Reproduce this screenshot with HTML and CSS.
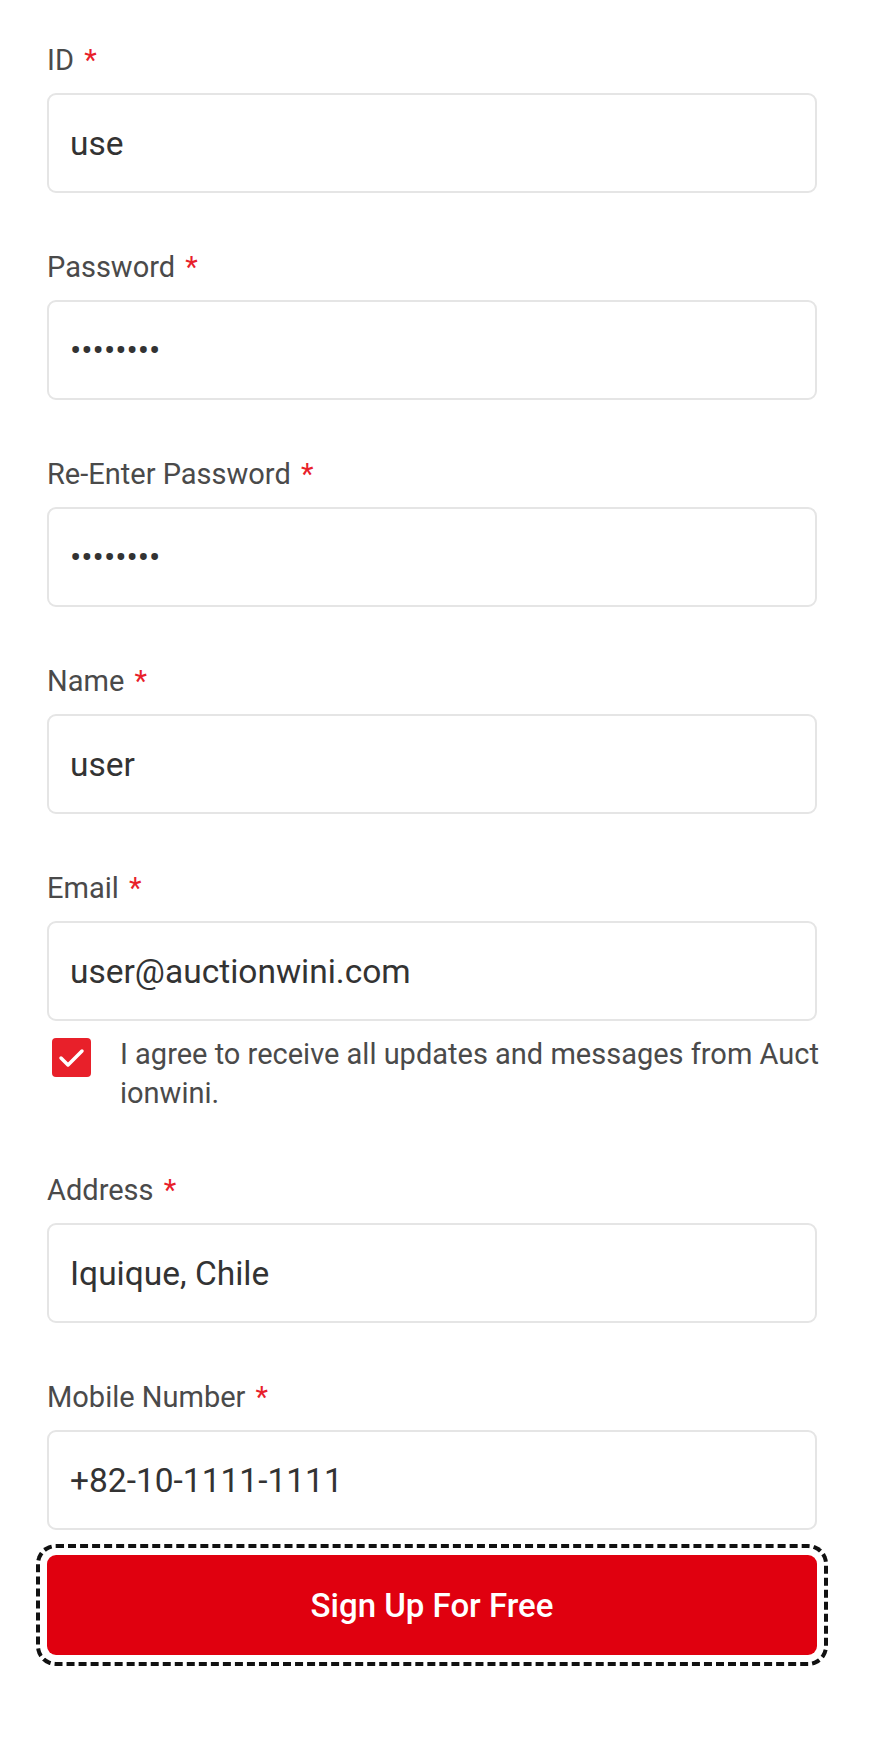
FILE: index.html
```html
<!DOCTYPE html>
<html lang="en">

<head>
  <meta charset="UTF-8">
  <meta name="viewport" content="width=device-width, initial-scale=1.0">
  <title>Sign Up</title>
  <link rel="stylesheet" href="styles.css">
</head>

<body>
  <form class="signup-form">
    <div class="field">
      <label class="field-label" for="userId">ID <span class="required">*</span></label>
      <input class="field-input" type="text" id="userId" value="use">
    </div>

    <div class="field">
      <label class="field-label" for="password">Password <span class="required">*</span></label>
      <input class="field-input" type="password" id="password" value="12345678">
    </div>

    <div class="field">
      <label class="field-label" for="passwordCheck">Re-Enter Password <span class="required">*</span></label>
      <input class="field-input" type="password" id="passwordCheck" value="12345678">
    </div>

    <div class="field">
      <label class="field-label" for="name">Name <span class="required">*</span></label>
      <input class="field-input" type="text" id="name" value="user">
    </div>

    <div class="field field-email">
      <label class="field-label" for="email">Email <span class="required">*</span></label>
      <input class="field-input" type="text" id="email" value="user@auctionwini.com">
      <div class="agree-row">
        <span class="agree-box">
          <svg width="39" height="39" viewBox="0 0 39 39">
            <path d="M9 20 L16 27 L30 13" fill="none" stroke="#fff" stroke-width="3.5" stroke-linecap="round" stroke-linejoin="round" />
          </svg>
        </span>
        <p class="agree-text">I agree to receive all updates and messages from Auctionwini.</p>
      </div>
    </div>

    <div class="field">
      <label class="field-label" for="address">Address <span class="required">*</span></label>
      <input class="field-input" type="text" id="address" value="Iquique, Chile">
    </div>

    <div class="field field-last">
      <label class="field-label" for="mobile">Mobile Number <span class="required">*</span></label>
      <input class="field-input" type="text" id="mobile" value="+82-10-1111-1111">
    </div>

    <button type="button" class="submit-button">Sign Up For Free</button>
  </form>
</body>

</html>
```

FILE: styles.css
```css
* {
  margin: 0;
  padding: 0;
  box-sizing: border-box;
}

body {
  background-color: #fff;
  font-family: Roboto, "Liberation Sans", sans-serif;
}

.signup-form {
  display: flex;
  flex-direction: column;
  width: 770px;
  margin-left: 47px;
  padding-top: 39px;
  padding-bottom: 60px;
}

.field {
  display: flex;
  flex-direction: column;
  margin-bottom: 53px;
}

.field-email {
  margin-bottom: 56px;
}

.field-last {
  margin-bottom: 25px;
}

.field-label {
  display: block;
  font-size: 29px;
  line-height: 42px;
  color: #4a4a4a;
  margin-bottom: 12px;
}

.required {
  color: #e8202a;
  margin-left: 3px;
}

.field-input {
  height: 100px;
  width: 100%;
  padding: 0 21px;
  font-family: Roboto, "Liberation Sans", sans-serif;
  font-size: 33.5px;
  color: #333;
  border: 2px solid #e5e5e5;
  border-radius: 9px;
  outline: none;
  background-color: #fff;
}

.agree-row {
  display: flex;
  align-items: flex-start;
  margin-top: 14px;
  margin-left: 5px;
}

.agree-box {
  flex: none;
  display: flex;
  width: 39px;
  height: 39px;
  margin-top: 3px;
  background-color: #e8202a;
  border-radius: 4px;
}

.agree-text {
  flex: none;
  width: 702px;
  margin-left: 29px;
  font-size: 29px;
  line-height: 39px;
  color: #4a4a4a;
  word-break: break-all;
}

.submit-button {
  height: 100px;
  width: 100%;
  border: none;
  border-radius: 9px;
  background-color: #e0000f;
  color: #fff;
  font-family: Roboto, "Liberation Sans", sans-serif;
  font-size: 33px;
  font-weight: 500;
  outline: 4px dashed #111;
  outline-offset: 7px;
  cursor: pointer;
}
```
